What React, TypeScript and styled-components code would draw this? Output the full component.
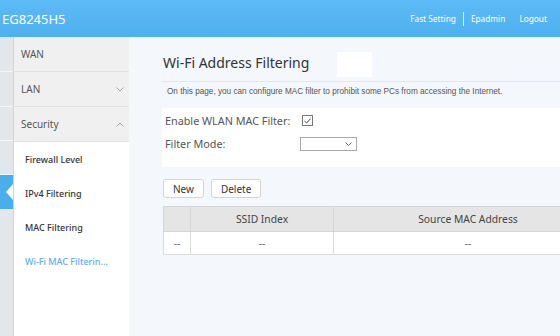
import React from 'react';
import styled, { createGlobalStyle } from 'styled-components';

const GlobalStyle = createGlobalStyle`
  html, body {
    margin: 0;
    padding: 0;
    width: 560px;
    height: 336px;
    overflow: hidden;
    font-family: 'Noto Sans', 'Open Sans', sans-serif;
  }
`;

const Page = styled.div`
  display: flex;
  flex-direction: column;
  width: 560px;
  height: 336px;
`;

const TopBar = styled.header`
  height: 37px;
  flex: none;
  display: flex;
  align-items: center;
  justify-content: space-between;
  padding: 0 13px 0 2px;
  background: linear-gradient(180deg, #5cbaf6 0%, #4fb0ee 100%);
  color: #fff;
`;

const Brand = styled.div`
  font-size: 13px;
`;

const TopLinks = styled.nav`
  display: flex;
  align-items: center;
  font-size: 8.3px;
`;

const TopLink = styled.span<{ $gap?: number }>`
  margin-left: ${(p) => p.$gap ?? 0}px;
`;

const Divider = styled.span`
  width: 1px;
  height: 14px;
  background: #e8f5ff;
  margin: 0 7px;
`;

const Body = styled.div`
  flex: 1;
  display: flex;
  min-height: 0;
`;

const Rail = styled.div`
  width: 13px;
  flex: none;
  background: #e2e7ec;
  border-right: 1px solid #cfd5db;
  display: flex;
  flex-direction: column;
`;

const RailSlot = styled.div<{ $active?: boolean; $h: number }>`
  position: relative;
  flex: none;
  height: ${(p) => p.$h}px;
  border-bottom: 1px solid ${(p) => (p.$active ? '#4aaeea' : '#f3f6f9')};
  background: ${(p) => (p.$active ? '#4aaeea' : 'transparent')};
  box-sizing: border-box;

  &::after {
    content: '';
    display: ${(p) => (p.$active ? 'block' : 'none')};
    position: absolute;
    right: 0;
    top: 50%;
    margin-top: -8px;
    border-top: 8px solid transparent;
    border-bottom: 8px solid transparent;
    border-right: 7px solid #fff;
  }
`;

const Sidebar = styled.aside`
  width: 115px;
  flex: none;
  background: #fff;
  display: flex;
  flex-direction: column;
`;

const MenuGroup = styled.div`
  height: 35px;
  flex: none;
  box-sizing: border-box;
  background: #f0f0f0;
  border-bottom: 1px solid #e2e2e2;
  display: flex;
  align-items: center;
  justify-content: space-between;
  padding: 0 5px 0 7px;
  font-size: 10px;
  color: #555;
`;

const SubItem = styled.div<{ $current?: boolean }>`
  height: 34px;
  flex: none;
  display: flex;
  align-items: center;
  padding-left: 11px;
  font-size: 9px;
  font-weight: 500;
  color: ${(p) => (p.$current ? '#5aaeee' : '#333')};
  white-space: nowrap;
`;

const Chevron = ({ up }: { up?: boolean }) => (
  <svg width="8" height="5" viewBox="0 0 8 5" fill="none" stroke="#a0a0a0" strokeWidth="1">
    {up ? <polyline points="0.5,4.5 4,1 7.5,4.5" /> : <polyline points="0.5,0.5 4,4 7.5,0.5" />}
  </svg>
);

const Main = styled.main`
  flex: 1;
  background: #f4f7fb;
  padding-left: 33px;
  display: flex;
  flex-direction: column;
  min-width: 0;
  overflow: hidden;
`;

const TitleRow = styled.div`
  margin-top: 15px;
  height: 25px;
  display: flex;
  align-items: center;
  padding-left: 1px;
`;

const Title = styled.h1`
  margin: 0 0 4px;
  font-size: 14px;
  font-weight: 400;
  color: #333;
`;

const Blank = styled.div`
  width: 35px;
  height: 25px;
  background: #fff;
  margin-left: 28px;
`;

const Description = styled.p`
  margin: 4px 0 0;
  border-top: 1px solid #e4e8ee;
  height: 27px;
  box-sizing: border-box;
  padding: 5px 0 0 5px;
  font-family: 'Liberation Sans', Arial, sans-serif;
  font-size: 8.2px;
  color: #555;
  white-space: nowrap;
`;

const FormPanel = styled.div`
  background: #fff;
  height: 59px;
  box-sizing: border-box;
  padding: 1px 0 0 3px;
  display: flex;
  flex-direction: column;
`;

const FormRow = styled.div`
  height: 23px;
  display: flex;
  align-items: center;
`;

const Label = styled.label`
  width: 135px;
  font-size: 10.8px;
  color: #555;
`;

const Check = styled.span`
  width: 9px;
  height: 9px;
  border: 1px solid #777;
  margin-left: 2px;
  display: flex;
  align-items: center;
  justify-content: center;
`;

const Select = styled.div`
  width: 51px;
  height: 12px;
  border: 1px solid #aaa;
  background: #fff;
  display: flex;
  align-items: center;
  justify-content: flex-end;
  padding-right: 4px;
  box-sizing: content-box;
`;

const Toolbar = styled.div`
  margin-top: 12px;
  display: flex;
  gap: 7px;
  padding-left: 1px;
`;

const Button = styled.button`
  height: 19px;
  padding: 0 9px;
  border: 1px solid #d4d4d4;
  border-radius: 3px;
  background: #fff;
  font-family: 'Noto Sans', sans-serif;
  font-size: 10px;
  color: #333;
  line-height: 1;
`;

const Table = styled.table`
  margin-top: 8px;
  margin-left: 1px;
  border-collapse: collapse;
  table-layout: fixed;
  width: 440px;
  flex: none;
  font-size: 10.3px;
  color: #444;
`;

const Th = styled.th<{ $w?: number }>`
  width: ${(p) => (p.$w ? `${p.$w}px` : 'auto')};
  height: 24px;
  background: #e5e5e5;
  border: 1px solid #d6d6d6;
  font-weight: 400;
  padding: 0;
`;

const Td = styled.td`
  height: 22px;
  background: #fff;
  border: 1px solid #dcdcdc;
  text-align: center;
  color: #666;
  padding: 0;
`;

export default function App() {
  return (
    <Page>
      <GlobalStyle />
      <TopBar>
        <Brand>EG8245H5</Brand>
        <TopLinks>
          <TopLink>Fast Setting</TopLink>
          <Divider />
          <TopLink>Epadmin</TopLink>
          <TopLink $gap={14}>Logout</TopLink>
        </TopLinks>
      </TopBar>
      <Body>
        <Rail>
          <RailSlot $h={35} />
          <RailSlot $h={35} />
          <RailSlot $h={34} />
          <RailSlot $h={34} />
          <RailSlot $h={34} $active />
        </Rail>
        <Sidebar>
          <MenuGroup>WAN</MenuGroup>
          <MenuGroup>
            LAN <Chevron />
          </MenuGroup>
          <MenuGroup>
            Security <Chevron up />
          </MenuGroup>
          <SubItem>Firewall Level</SubItem>
          <SubItem>IPv4 Filtering</SubItem>
          <SubItem>MAC Filtering</SubItem>
          <SubItem $current>Wi-Fi MAC Filterin...</SubItem>
        </Sidebar>
        <Main>
          <TitleRow>
            <Title>Wi-Fi Address Filtering</Title>
            <Blank />
          </TitleRow>
          <Description>
            On this page, you can configure MAC filter to prohibit some PCs from accessing the Internet.
          </Description>
          <FormPanel>
            <FormRow>
              <Label>Enable WLAN MAC Filter:</Label>
              <Check>
                <svg width="7" height="6" viewBox="0 0 7 6" fill="none" stroke="#444" strokeWidth="1">
                  <polyline points="0.5,3 2.7,5 6.5,0.7" />
                </svg>
              </Check>
            </FormRow>
            <FormRow>
              <Label>Filter Mode:</Label>
              <Select>
                <svg width="7" height="4" viewBox="0 0 7 4" fill="none" stroke="#666" strokeWidth="1">
                  <polyline points="0.5,0.5 3.5,3.5 6.5,0.5" />
                </svg>
              </Select>
            </FormRow>
          </FormPanel>
          <Toolbar>
            <Button>New</Button>
            <Button>Delete</Button>
          </Toolbar>
          <Table>
            <thead>
              <tr>
                <Th $w={26} />
                <Th $w={142}>SSID Index</Th>
                <Th>Source MAC Address</Th>
              </tr>
            </thead>
            <tbody>
              <tr>
                <Td>--</Td>
                <Td>--</Td>
                <Td>--</Td>
              </tr>
            </tbody>
          </Table>
        </Main>
      </Body>
    </Page>
  );
}
